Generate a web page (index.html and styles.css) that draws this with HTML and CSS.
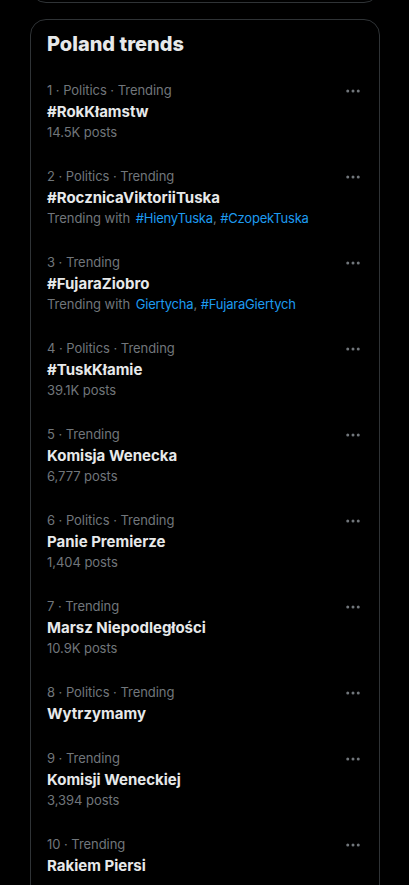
FILE: index.html
```html
<!DOCTYPE html>
<html lang="en">
<head>
<meta charset="utf-8">
<title>Poland trends</title>
<link rel="stylesheet" href="styles.css">
</head>
<body>
<div class="column">
  <div class="prev-card"></div>
  <section class="card">
    <h2 class="card-title">Poland trends</h2>

    <div class="trend">
      <div class="trend-text">
        <div class="meta">1 · Politics · Trending</div>
        <div class="name">#RokKłamstw</div>
        <div class="sub">14.5K posts</div>
      </div>
      <div class="more"><svg viewBox="0 0 24 24"><circle cx="5" cy="12" r="2"/><circle cx="12" cy="12" r="2"/><circle cx="19" cy="12" r="2"/></svg></div>
    </div>

    <div class="trend">
      <div class="trend-text">
        <div class="meta">2 · Politics · Trending</div>
        <div class="name">#RocznicaViktoriiTuska</div>
        <div class="sub">Trending with <span class="link">#HienyTuska</span>, <span class="link">#CzopekTuska</span></div>
      </div>
      <div class="more"><svg viewBox="0 0 24 24"><circle cx="5" cy="12" r="2"/><circle cx="12" cy="12" r="2"/><circle cx="19" cy="12" r="2"/></svg></div>
    </div>

    <div class="trend">
      <div class="trend-text">
        <div class="meta">3 · Trending</div>
        <div class="name">#FujaraZiobro</div>
        <div class="sub">Trending with <span class="link">Giertycha</span>, <span class="link">#FujaraGiertych</span></div>
      </div>
      <div class="more"><svg viewBox="0 0 24 24"><circle cx="5" cy="12" r="2"/><circle cx="12" cy="12" r="2"/><circle cx="19" cy="12" r="2"/></svg></div>
    </div>

    <div class="trend">
      <div class="trend-text">
        <div class="meta">4 · Politics · Trending</div>
        <div class="name">#TuskKłamie</div>
        <div class="sub">39.1K posts</div>
      </div>
      <div class="more"><svg viewBox="0 0 24 24"><circle cx="5" cy="12" r="2"/><circle cx="12" cy="12" r="2"/><circle cx="19" cy="12" r="2"/></svg></div>
    </div>

    <div class="trend">
      <div class="trend-text">
        <div class="meta">5 · Trending</div>
        <div class="name">Komisja Wenecka</div>
        <div class="sub">6,777 posts</div>
      </div>
      <div class="more"><svg viewBox="0 0 24 24"><circle cx="5" cy="12" r="2"/><circle cx="12" cy="12" r="2"/><circle cx="19" cy="12" r="2"/></svg></div>
    </div>

    <div class="trend">
      <div class="trend-text">
        <div class="meta">6 · Politics · Trending</div>
        <div class="name">Panie Premierze</div>
        <div class="sub">1,404 posts</div>
      </div>
      <div class="more"><svg viewBox="0 0 24 24"><circle cx="5" cy="12" r="2"/><circle cx="12" cy="12" r="2"/><circle cx="19" cy="12" r="2"/></svg></div>
    </div>

    <div class="trend">
      <div class="trend-text">
        <div class="meta">7 · Trending</div>
        <div class="name">Marsz Niepodległości</div>
        <div class="sub">10.9K posts</div>
      </div>
      <div class="more"><svg viewBox="0 0 24 24"><circle cx="5" cy="12" r="2"/><circle cx="12" cy="12" r="2"/><circle cx="19" cy="12" r="2"/></svg></div>
    </div>

    <div class="trend">
      <div class="trend-text">
        <div class="meta">8 · Politics · Trending</div>
        <div class="name">Wytrzymamy</div>
      </div>
      <div class="more"><svg viewBox="0 0 24 24"><circle cx="5" cy="12" r="2"/><circle cx="12" cy="12" r="2"/><circle cx="19" cy="12" r="2"/></svg></div>
    </div>

    <div class="trend">
      <div class="trend-text">
        <div class="meta">9 · Trending</div>
        <div class="name">Komisji Weneckiej</div>
        <div class="sub">3,394 posts</div>
      </div>
      <div class="more"><svg viewBox="0 0 24 24"><circle cx="5" cy="12" r="2"/><circle cx="12" cy="12" r="2"/><circle cx="19" cy="12" r="2"/></svg></div>
    </div>

    <div class="trend">
      <div class="trend-text">
        <div class="meta">10 · Trending</div>
        <div class="name">Rakiem Piersi</div>
      </div>
      <div class="more"><svg viewBox="0 0 24 24"><circle cx="5" cy="12" r="2"/><circle cx="12" cy="12" r="2"/><circle cx="19" cy="12" r="2"/></svg></div>
    </div>
  </section>
</div>
</body>
</html>
```

FILE: styles.css
```css
html, body {
  margin: 0;
  padding: 0;
  background: #000;
  height: 885px;
  overflow: hidden;
}

body {
  font-family: Inter, "Noto Sans", sans-serif;
  color: #e7e9ea;
}

.column {
  width: 350px;
  margin-left: 30px;
  display: flex;
  flex-direction: column;
  gap: 16px;
}

.prev-card {
  height: 40px;
  margin-top: -37px;
  border: 1px solid #2f3336;
  border-radius: 16px;
  box-sizing: border-box;
}

.card {
  border: 1px solid #2f3336;
  border-radius: 16px;
  box-sizing: border-box;
  padding-bottom: 20px;
}

.card-title {
  margin: 0;
  padding: 12px 16px;
  font-size: 20px;
  line-height: 24px;
  font-weight: 800;
  color: #e7e9ea;
}

.trend {
  display: flex;
  justify-content: space-between;
  align-items: flex-start;
  padding: 12px 16px;
}

.trend-text {
  display: flex;
  flex-direction: column;
  min-width: 0;
}

.meta, .sub {
  font-size: 13px;
  line-height: 20px;
  color: #71767b;
  letter-spacing: -0.05px;
}

.name {
  font-size: 15px;
  line-height: 22px;
  font-weight: 700;
  color: #e7e9ea;
  padding-top: 1px;
  margin-bottom: -1px;
}

.link {
  color: #1d9bf0;
  margin-left: 2px;
  letter-spacing: -0.2px;
}

.sub .link + .link {
  margin-left: 0;
}

.more {
  width: 18px;
  height: 20px;
  display: flex;
  align-items: center;
  justify-content: center;
  margin-right: 1px;
  padding-top: 1px;
}

.more svg {
  width: 18px;
  height: 18px;
  fill: #71767b;
}
```
